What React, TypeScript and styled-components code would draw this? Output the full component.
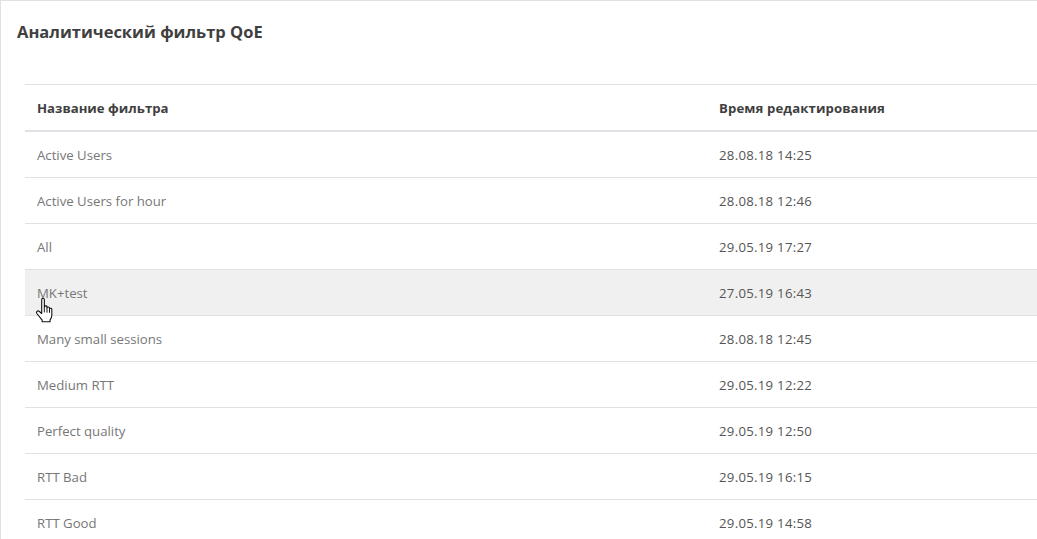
import React from "react";
import styled, { createGlobalStyle } from "styled-components";

const Global = createGlobalStyle`
  html, body { margin: 0; padding: 0; background: #fff; height: 100%; overflow: hidden; }
  #root { height: 100%; }
`;

const Page = styled.div`
  box-sizing: border-box;
  height: 539px;
  overflow: hidden;
  border-top: 1px solid #dee2e6;
  border-left: 1px solid #dee2e6;
  padding: 21px 0 0 16px;
  font-family: "Open Sans", "Liberation Sans", sans-serif;
  color: #343a40;
`;

const Title = styled.h1`
  margin: 0 0 42px;
  font-size: 16.5px;
  line-height: 20px;
  font-weight: 700;
  color: #3f3f3f;
`;

const Table = styled.div`
  margin-left: 8px;
  border-top: 1px solid #dee2e6;
`;

const Row = styled.div<{ $head?: boolean; $hover?: boolean }>`
  position: relative;
  display: grid;
  grid-template-columns: 694px 1fr;
  box-sizing: border-box;
  height: ${(p) => (p.$head ? "47px" : "46px")};
  align-items: center;
  border-bottom: ${(p) => (p.$head ? "2px" : "1px")} solid #dee2e6;
  background: ${(p) => (p.$hover ? "#f0f0f0" : "transparent")};
  font-size: 13.2px;
  font-weight: ${(p) => (p.$head ? 700 : 400)};
`;

const NameCell = styled.div<{ $head?: boolean }>`
  padding-left: 12px;
  color: ${(p) => (p.$head ? "#3f3f3f" : "#777")};
`;

const TimeCell = styled.div<{ $head?: boolean }>`
  color: ${(p) => (p.$head ? "#3f3f3f" : "#555")};
  letter-spacing: ${(p) => (p.$head ? "0.1px" : "0.28px")};
`;

const Cursor = styled.svg`
  position: absolute;
  left: 9px;
  top: 27px;
  width: 22px;
  height: 28.6px;
`;

const HandCursor = () => (
  <Cursor viewBox="0 0 20 26">
    <path
      d="M7 2.2c0-1.4 2.4-1.4 2.4 0V9c.3-1.2 2.3-1.2 2.4 0v.8c.4-1 2.2-1 2.3.2v.8c.5-.9 2.1-.7 2.1.5v5.2c0 2-1 3.2-1.6 4.4v1.6H7.4v-1.4L2.6 15c-1-1.2.6-3 2-2L7 15z"
      fill="#fff"
      stroke="#111"
      strokeWidth="1"
      strokeLinejoin="round"
    />
    <path d="M9.4 9v5M11.8 9.8v4.4M14.1 10.8v3.6" stroke="#111" strokeWidth="0.9" fill="none" />
  </Cursor>
);

const rows = [
  ["Active Users", "28.08.18 14:25"],
  ["Active Users for hour", "28.08.18 12:46"],
  ["All", "29.05.19 17:27"],
  ["MK+test", "27.05.19 16:43"],
  ["Many small sessions", "28.08.18 12:45"],
  ["Medium RTT", "29.05.19 12:22"],
  ["Perfect quality", "29.05.19 12:50"],
  ["RTT Bad", "29.05.19 16:15"],
  ["RTT Good", "29.05.19 14:58"],
];

export default function App() {
  return (
    <Page>
      <Global />
      <Title>Аналитический фильтр QoE</Title>
      <Table>
        <Row $head>
          <NameCell $head>Название фильтра</NameCell>
          <TimeCell $head>Время редактирования</TimeCell>
        </Row>
        {rows.map(([name, time]) => (
          <Row key={name} $hover={name === "MK+test"}>
            <NameCell>{name}</NameCell>
            <TimeCell>{time}</TimeCell>
            {name === "MK+test" && <HandCursor />}
          </Row>
        ))}
      </Table>
    </Page>
  );
}
